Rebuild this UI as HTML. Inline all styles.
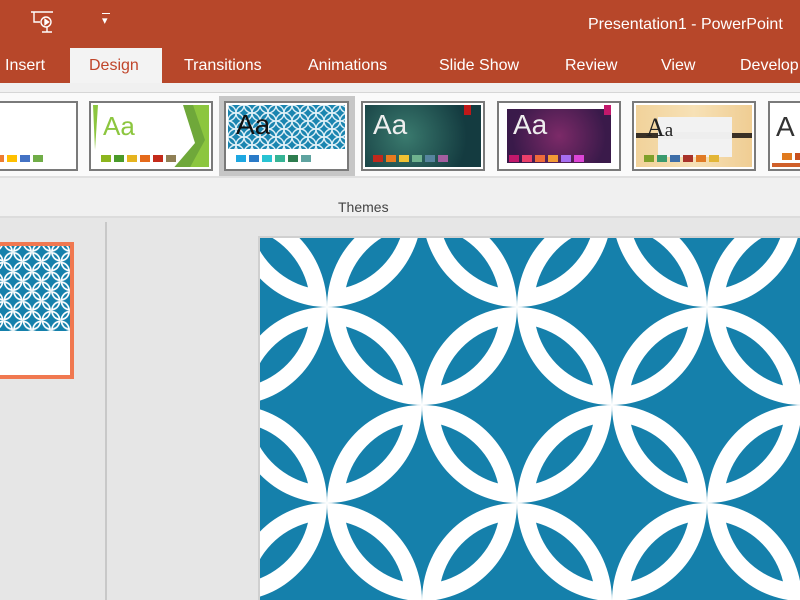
<!DOCTYPE html>
<html><head><meta charset="utf-8"><style>
*{margin:0;padding:0;box-sizing:border-box}
body{width:800px;height:600px;overflow:hidden;background:#e6e6e6;font-family:"Liberation Sans",sans-serif;position:relative}
.abs{position:absolute}
.title{left:0;top:0;width:800px;height:83px;background:#b7472a}
.tab{position:absolute;top:57px;color:#fff;font-size:16px}
.th{position:absolute;top:101px;height:70px;border:2px solid #7a7a7a;background:#fff;padding:2px}
.th .in{position:relative;width:100%;height:100%;overflow:hidden}
.sw{position:absolute;height:7px;width:10px}
.aa{position:absolute;font-size:26px}
</style></head><body>
<svg width="0" height="0" style="position:absolute"><defs>
<g id="la"><path d="M0,0 A95,98 0 0 1 95,98 A95,98 0 0 1 0,0 Z" fill="#fff"/><path d="M19,19.6 A80,80 0 0 1 76,78.4 A80,80 0 0 1 19,19.6 Z" fill="#1580ab"/></g>
<g id="lb"><path d="M0,98 A95,98 0 0 1 95,0 A95,98 0 0 1 0,98 Z" fill="#fff"/><path d="M19,78.4 A80,80 0 0 1 76,19.6 A80,80 0 0 1 19,78.4 Z" fill="#1580ab"/></g>
<pattern id="bp" patternUnits="userSpaceOnUse" width="190" height="196" x="-123" y="-29"><rect width="190" height="196" fill="#1580ab"/><use href="#la" x="95" y="0"/><use href="#lb" x="0" y="0"/><use href="#la" x="0" y="98"/><use href="#lb" x="95" y="98"/></pattern>
<pattern id="tp" patternUnits="userSpaceOnUse" width="190" height="196" x="-60" y="-40" patternTransform="scale(0.1)"><rect width="190" height="196" fill="#1580ab"/><use href="#la" x="95" y="0"/><use href="#lb" x="0" y="0"/><use href="#la" x="0" y="98"/><use href="#lb" x="95" y="98"/></pattern>
</defs></svg>
<div class="abs title"></div>
<svg class="abs" style="left:30px;top:10px" width="26" height="26" viewBox="0 0 26 26" fill="none" stroke="#fff" stroke-width="1.4"><path d="M1 2h22M4 2v10h6M12 22h10M17 17v5"/><circle cx="16" cy="12" r="5"/><path d="M15 9.5v5l3.5-2.5z" fill="#fff"/></svg>
<div class="abs" style="left:102px;top:14px;color:#fff;font-size:11px">&#9662;</div>
<div class="abs" style="left:102px;top:13px;width:8px;height:1px;background:#fff"></div>
<div class="abs" style="left:588px;top:16px;color:#fff;font-size:16px;white-space:nowrap">Presentation1 - PowerPoint</div>
<div class="abs" style="left:70px;top:48px;width:92px;height:36px;background:#f3f3f3"></div>
<div class="tab" style="left:5px">Insert</div>
<div class="tab" style="left:89px;color:#c0452a">Design</div>
<div class="tab" style="left:184px">Transitions</div>
<div class="tab" style="left:308px">Animations</div>
<div class="tab" style="left:439px">Slide Show</div>
<div class="tab" style="left:565px">Review</div>
<div class="tab" style="left:661px">View</div>
<div class="tab" style="left:740px">Develop</div>
<div class="abs" style="left:0;top:83px;width:800px;height:135px;background:#f0f0f0;border-bottom:2px solid #dcdcdc"></div>
<div class="abs" style="left:0;top:92px;width:800px;height:86px;background:#fafafa;border-top:1px solid #d6d6d6;border-bottom:2px solid #e0e0e0"></div>
<div class="abs" style="left:338px;top:199px;font-size:14px;color:#444">Themes</div>
<div class="th" style="left:-10px;width:88px"><div class="in">
<div class="sw" style="left:0;top:50px;background:#ee7d31"></div><div class="sw" style="left:13px;top:50px;background:#ffc000"></div><div class="sw" style="left:26px;top:50px;background:#4472c4"></div><div class="sw" style="left:39px;top:50px;background:#70ad47"></div></div></div>
<div class="th" style="left:89px;width:124px"><div class="in">
<svg class="abs" style="left:0;top:0" width="120" height="66"><polygon points="0,0 5,0 2,45" fill="#8cc63f"/><polygon points="90,0 120,0 120,66 78,66 102,38" fill="#6fa83a"/><polygon points="100,0 120,0 120,66 95,66 112,35" fill="#8cc63f"/></svg>
<div class="aa" style="left:10px;top:6px;color:#8cc63f">Aa</div>
<div class="sw" style="left:8px;top:50px;background:#8cb51e"></div><div class="sw" style="left:21px;top:50px;background:#4a9a2a"></div><div class="sw" style="left:34px;top:50px;background:#e6b41f"></div><div class="sw" style="left:47px;top:50px;background:#e56a1b"></div><div class="sw" style="left:60px;top:50px;background:#c42a1a"></div><div class="sw" style="left:73px;top:50px;background:#8f7f55"></div></div></div>
<div class="abs" style="left:219px;top:96px;width:136px;height:80px;background:#c6c6c6"></div>
<div class="th" style="left:224px;width:125px;top:101px"><div class="in">
<svg class="abs" style="left:0;top:0" width="121" height="44"><defs><pattern id="sp" patternUnits="userSpaceOnUse" width="16" height="16"><rect width="16" height="16" fill="#1a85b0"/><g fill="none" stroke="#dff0f7" stroke-width="1.4"><circle cx="0" cy="8" r="8"/><circle cx="16" cy="8" r="8"/><circle cx="8" cy="0" r="8"/><circle cx="8" cy="16" r="8"/></g></pattern></defs><rect width="121" height="44" fill="url(#sp)"/></svg>
<div class="aa" style="left:8px;top:4px;color:#111;font-size:28px">Aa</div>
<div class="sw" style="left:8px;top:50px;background:#1ea7e1"></div><div class="sw" style="left:21px;top:50px;background:#2b7bc8"></div><div class="sw" style="left:34px;top:50px;background:#28c3d3"></div><div class="sw" style="left:47px;top:50px;background:#36b495"></div><div class="sw" style="left:60px;top:50px;background:#2e7d4f"></div><div class="sw" style="left:73px;top:50px;background:#5fa3a0"></div></div></div>
<div class="th" style="left:361px;width:124px"><div class="in" style="background:radial-gradient(circle at 35% 50%,#3a7a6e,#143b40 75%)">
<div class="abs" style="right:10px;top:0;width:7px;height:10px;background:#c01818"></div>
<div class="aa" style="left:8px;top:4px;color:#eee;font-size:28px">Aa</div>
<div class="sw" style="left:8px;top:50px;background:#c0281c"></div><div class="sw" style="left:21px;top:50px;background:#e87a1e"></div><div class="sw" style="left:34px;top:50px;background:#f1c232"></div><div class="sw" style="left:47px;top:50px;background:#6eb28e"></div><div class="sw" style="left:60px;top:50px;background:#56849e"></div><div class="sw" style="left:73px;top:50px;background:#a35ea0"></div></div></div>
<div class="th" style="left:497px;width:124px"><div class="in" style="background:#fff"><div class="abs" style="left:6px;top:4px;right:6px;bottom:4px;background:radial-gradient(circle at 50% 50%,#7c2a68,#3a1a4a 80%)"></div>
<div class="abs" style="right:6px;top:0;width:7px;height:10px;background:#c2186b"></div>
<div class="aa" style="left:12px;top:4px;color:#eee;font-size:28px">Aa</div>
<div class="sw" style="left:8px;top:50px;background:#c2186b"></div><div class="sw" style="left:21px;top:50px;background:#ea3f6a"></div><div class="sw" style="left:34px;top:50px;background:#ef6a3a"></div><div class="sw" style="left:47px;top:50px;background:#f29a35"></div><div class="sw" style="left:60px;top:50px;background:#a66ef0"></div><div class="sw" style="left:73px;top:50px;background:#dc45d6"></div></div></div>
<div class="th" style="left:632px;width:124px"><div class="in" style="background:linear-gradient(90deg,#f1d29a,#f7e1b6 50%,#efcd93)">
<div class="abs" style="left:22px;top:12px;width:74px;height:40px;background:#f2f2f2"></div>
<div class="abs" style="left:0;top:28px;width:120px;height:5px;background:#3a3025"></div>
<div class="abs" style="left:22px;top:27px;width:74px;height:7px;background:#eee"></div>
<div class="aa" style="left:10px;top:8px;color:#222;font-family:'Liberation Serif',serif;font-size:26px">A<span style="font-size:19px">a</span></div>
<div class="sw" style="left:8px;top:50px;background:#7fa02a"></div><div class="sw" style="left:21px;top:50px;background:#3a9a6e"></div><div class="sw" style="left:34px;top:50px;background:#3e6ea8"></div><div class="sw" style="left:47px;top:50px;background:#a8322a"></div><div class="sw" style="left:60px;top:50px;background:#e07a25"></div><div class="sw" style="left:73px;top:50px;background:#e3b637"></div></div></div>
<div class="th" style="left:768px;width:60px"><div class="in">
<div class="aa" style="left:4px;top:6px;color:#333;font-size:28px">A</div>
<div class="sw" style="left:10px;top:48px;background:#e07a1e"></div><div class="sw" style="left:23px;top:48px;background:#c8501e"></div>
<div class="abs" style="left:0;top:58px;width:60px;height:4px;background:#d0602a"></div></div></div>
<div class="abs" style="left:105px;top:222px;width:2px;height:378px;background:#c8c8c8"></div>
<div class="abs" style="left:-4px;top:242px;width:78px;height:137px;border:4px solid #f07850;background:#fff;overflow:hidden">
<svg class="abs" style="left:0;top:0" width="70" height="85"><rect width="70" height="85" fill="url(#tp)"/></svg>
</div>
<div class="abs" style="left:258px;top:236px;width:542px;height:364px;background:#d0d0d0"></div>
<svg class="abs" style="left:260px;top:238px" width="540" height="362"><rect width="540" height="362" fill="url(#bp)"/></svg>
</body></html>
